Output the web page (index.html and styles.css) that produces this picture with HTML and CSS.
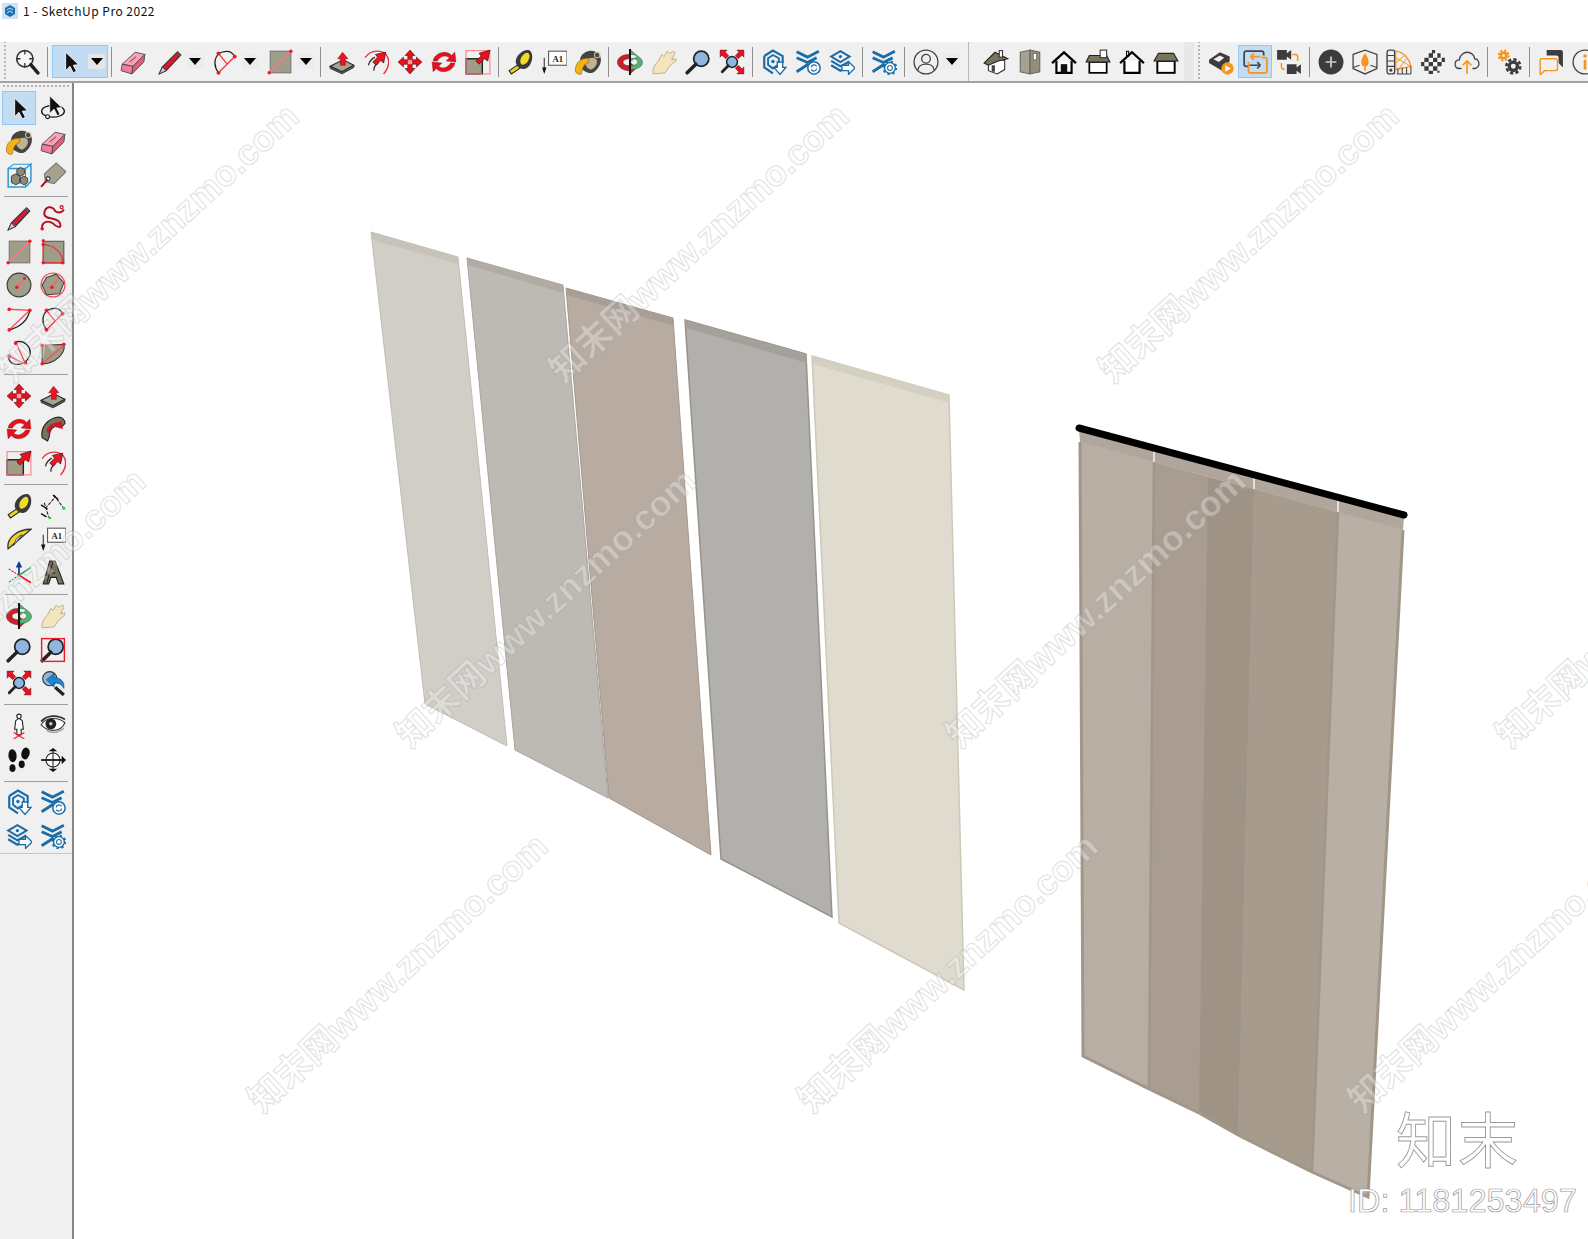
FILE: index.html
```html
<!DOCTYPE html>
<html lang="zh">
<head>
<meta charset="utf-8">
<title>1 - SketchUp Pro 2022</title>
<link rel="stylesheet" href="styles.css">
</head>
<body>
<svg class="defs" aria-hidden="true">
<defs>
<symbol id="mag" viewBox="0 0 24 24"><circle cx="10" cy="9" r="7.5" fill="#f6f6f6" stroke="#333" stroke-width="1.5"/><path d="M10 1v4M10 13v4M2 9h4M14 9h4" stroke="#333" stroke-width="1.2"/><path d="M15.5 14.5L22 22" stroke="#222" stroke-width="3.2" stroke-linecap="round"/></symbol>
<symbol id="sel" viewBox="0 0 24 24"><path d="M8 3V20L12 16L15 22L18 20.5L15 15L20 14.5Z" fill="#111" stroke="#fff" stroke-width=".8"/></symbol>
<symbol id="eraser" viewBox="0 0 24 24"><path d="M2 14L14 3L23 5L12 16Z" fill="#f7a3b8" stroke="#444" stroke-width=".8"/><path d="M2 14L12 16L11 23L1 20Z" fill="#f07c9b" stroke="#444" stroke-width=".8"/><path d="M23 5L22 12L11 23L12 16Z" fill="#d9607f" stroke="#444" stroke-width=".8"/><path d="M9 12l6-5" stroke="#a55" stroke-width="1"/></symbol>
<symbol id="pencil" viewBox="0 0 24 24"><path d="M2 23L5 16.5L19 2.5L22 5.5L8.500 20Z" fill="#d9192e" stroke="#333" stroke-width="1"/><path d="M2 23L5 16.500L8.500 20Z" fill="#ccc" stroke="#333" stroke-width=".8"/><path d="M19 2.500L22 5.500L20.500 7L17.500 4Z" fill="#555"/></symbol>
<symbol id="arc3" viewBox="0 0 24 24"><path d="M6 22C0 14 3 5 9 3C15 1 19 3 21 7" fill="none" stroke="#222" stroke-width="1.2"/><path d="M6 4L14 14M21 7L6 22" stroke="#f6333f" stroke-width="1.2"/><g fill="#f01828"><circle cx="6" cy="4" r="1.8"/><circle cx="21" cy="7" r="1.8"/><circle cx="6" cy="22" r="1.8"/></g></symbol>
<symbol id="rect" viewBox="0 0 24 24"><rect x="3" y="2" width="19" height="20" fill="#9f9c87" stroke="#777"/><path d="M2 22L22 2" stroke="#fa7a82" stroke-width="1.4"/><circle cx="2" cy="22" r="1.6" fill="#f01828"/><circle cx="22" cy="2" r="1.6" fill="#f01828"/></symbol>
<symbol id="push" viewBox="0 0 24 24"><path d="M1 16L13 10L23 15L12 21Z" fill="#a5a28d" stroke="#222" stroke-width="1"/><path d="M1 16V18L12 23L23 17V15L12 21Z" fill="#555" stroke="#222" stroke-width=".6"/><path d="M12.500 3L17.500 9H15V15H10.500V9H8Z" fill="#ec1325" stroke="#811" stroke-width=".5"/></symbol>
<symbol id="follow" viewBox="0 0 24 24"><path d="M2 8C7 0 20 0 23 8C25 14 22 20 19 23" fill="none" stroke="#f02c3a" stroke-width="1.3"/><path d="M5 15C6 11 8 9 11 7.500M10 20C10 16 12 14 14 13" fill="none" stroke="#333" stroke-width="1.2"/><path d="M21 3L19 13L16.500 10.500L12 15L9 12L13.500 7.500L11.500 5Z" fill="#ec1325" stroke="#411" stroke-width=".7"/></symbol>
<symbol id="move" viewBox="0 0 24 24"><path d="M12 1L16.500 6H14V10H18V7.500L23 12L18 16.500V14H14V18H16.500L12 23L7.500 18H10V14H6V16.500L1 12L6 7.500V10H10V6H7.500Z" fill="#e8101f" stroke="#511" stroke-width=".6"/><path d="M10 10h4v4h-4z" fill="#f1a0a0"/></symbol>
<symbol id="rotate" viewBox="0 0 24 24"><path d="M2 11C3 4 14 0 19 6L22 3L23 12L14 11L17 8C13 5 8 7 6 11Z" fill="#e8101f" stroke="#711" stroke-width=".4"/><path d="M22 13C21 20 10 24 5 18L2 21L1 12L10 13L7 16C11 19 16 17 18 13Z" fill="#e8101f" stroke="#711" stroke-width=".4"/></symbol>
<symbol id="scale" viewBox="0 0 24 24"><rect x="1" y="9" width="15" height="14" fill="#9f9c87" stroke="#222" stroke-width="1.3"/><rect x="1" y="1.500" width="22" height="21.500" fill="none" stroke="#f98088"/><path d="M23 1L21 11L18 9L13 14L10 11L15 6.500L13 4Z" fill="#e8101f" stroke="#511" stroke-width=".7"/></symbol>
<symbol id="tape" viewBox="0 0 24 24"><path d="M11 14L2 20L4 23L13 17Z" fill="#eed31d" stroke="#222" stroke-width="1"/><path d="M8 12C8 6 15 0 20 1C25 3 24 13 19 17C15 20 9 18 8 12Z" fill="#3a3a3a"/><ellipse cx="16.500" cy="9" rx="3.500" ry="6" transform="rotate(30 16.500 9)" fill="#f2dc2a"/></symbol>
<symbol id="text" viewBox="0 0 24 24"><rect x="7" y="2" width="17" height="13" fill="#fff" stroke="#555"/><text x="15.500" y="12" text-anchor="middle" class="a1">A1</text><path d="M3 8V21" stroke="#333"/><path d="M1 17h4l-2 6z" fill="#111"/></symbol>
<symbol id="paint" viewBox="0 0 24 24"><path d="M5 8C8 1 17 0 21.500 4C26 9 24 16 18 21C14 24 7 21 4 15Z" fill="#444"/><path d="M9 12C11 8 17 7 19.500 9.500C22 13 18 18 15 19C12 19 9 15 9 12Z" fill="#c1b291"/><circle cx="20.500" cy="5.500" r="2.500" fill="none" stroke="#c9bc9a"/><path d="M0.500 21C-0.500 13 5 8 13 8.500L12 13C9 13.500 7 16 6 23C4 24 1.500 23 0.500 21Z" fill="#f5b116" stroke="#7b5a0a" stroke-width=".5"/></symbol>
<symbol id="orbit" viewBox="0 0 24 24"><path d="M11.500 5C5 5 0 8 0.500 13C1 17 6 20 11.500 20V23.500L18 17.500L11.500 12V15.500C8 15.500 5.500 14 5.500 12C5.500 10.500 8 9 11.500 9Z" fill="#c8202e" stroke="#611" stroke-width=".5"/><path d="M12.500 5V1L19 6.500L12.500 11.500V8.500C16 8.500 19 9.500 19 12C19 14 16.500 15 12.500 15.500V19C19 19 24 16 23.500 12C23 8 18 5 12.500 5Z" fill="#58b26f" stroke="#265" stroke-width=".5"/><path d="M12 0V24" stroke="#111" stroke-width="1.8"/></symbol>
<symbol id="pan" viewBox="0 0 24 24"><path d="M2 23C1 18 4 14 7 11L10 5L12 7L15 2L17 4L21 2L22 4L19 10L23 9L23 11L17 16L13 22Z" fill="#f3e6bf" stroke="#b8a67e" stroke-width=".8"/></symbol>
<symbol id="zoom" viewBox="0 0 24 24"><circle cx="15" cy="9" r="7" fill="#8fb6e0" stroke="#222" stroke-width="1.6"/><path d="M10 14L2 22" stroke="#222" stroke-width="3.2" stroke-linecap="round"/></symbol>
<symbol id="zoomw" viewBox="0 0 24 24"><circle cx="14.500" cy="9" r="7" fill="#8fb6e0" stroke="#222" stroke-width="1.6"/><path d="M10 14L2 22" stroke="#222" stroke-width="3.2" stroke-linecap="round"/><rect x="1.500" y="1.500" width="21" height="21" fill="none" stroke="#ee1a2b" stroke-width="1.3"/></symbol>
<symbol id="zext" viewBox="0 0 24 24"><circle cx="12" cy="12" r="5" fill="#8fb6e0" stroke="#222" stroke-width="1.4"/><path d="M8.500 15.500L3 21" stroke="#222" stroke-width="2.6" stroke-linecap="round"/><path d="M1 1H7.500L5.700 2.800L9 6.200L6.200 9L2.800 5.700L1 7.500ZM23 1V7.500L21.200 5.700L17.800 9L15 6.200L18.300 2.800L16.500 1ZM23 23H16.500L18.300 21.200L15 17.800L17.800 15L21.200 18.300L23 16.500Z" fill="#e8101f" stroke="#411" stroke-width=".4"/></symbol>
<symbol id="prev" viewBox="0 0 24 24"><circle cx="9" cy="8" r="6.500" fill="#8fb6e0" stroke="#333"/><path d="M6 9L13 3V7C19 7 23 11 22 17C20 13 17 12 13 12V16Z" fill="#1e86d8" stroke="#135" stroke-width=".5"/><path d="M14 16L22 23" stroke="#222" stroke-width="3"/></symbol>
<symbol id="ext1" viewBox="0 0 24 24"><path d="M3 6.500L11 1.500L20 6.500V13M3 6.500V17L11 22.500" fill="none" stroke="#1a6ca8" stroke-width="2"/><path d="M11 5.500L16.500 8.500V14L11 18L6.500 14.500V8.500Z" fill="none" stroke="#1a6ca8" stroke-width="1.700"/><circle cx="11" cy="11.500" r="1.600" fill="#1a6ca8"/><path d="M15 12h5v5h3l-5.500 6.500L12 17h3z" fill="#fff" stroke="#1a6ca8" stroke-width="1.200"/></symbol>
<symbol id="ext2" viewBox="0 0 24 24"><path d="M1.500 2.500L11.500 7.500L22 2M1.500 8L11.500 12.500L20 8M1.500 21L11.500 14.500L14 16" fill="none" stroke="#1a6ca8" stroke-width="2.600"/><circle cx="17.500" cy="17.500" r="5.700" fill="#fff" stroke="#1a6ca8" stroke-width="1.400"/><path d="M15 17a2.700 2.700 0 0 1 5 -1M20 18a2.700 2.700 0 0 1 -5 1" fill="none" stroke="#1a6ca8" stroke-width="1.100"/></symbol>
<symbol id="ext3" viewBox="0 0 24 24"><path d="M10.500 2L19 7L10.500 12L2 7Z" fill="none" stroke="#1a6ca8" stroke-width="1.800"/><circle cx="10.500" cy="7" r="1.500" fill="#1a6ca8"/><path d="M2 11L10.500 16L18 12M2 15L10.500 20L14 18" fill="none" stroke="#1a6ca8" stroke-width="2"/><path d="M12 15h6v-3.500l6 6l-6 6V20h-6z" fill="#fff" stroke="#1a6ca8" stroke-width="1.200"/></symbol>
<symbol id="ext4" viewBox="0 0 24 24"><path d="M1.500 2.500L11.500 7.500L22 2M1.500 8L11.500 12.500L20 8M1.500 21L11.500 14.500L14 16" fill="none" stroke="#1a6ca8" stroke-width="2.600"/><circle cx="17.500" cy="17.500" r="5" fill="#fff" stroke="#1a6ca8" stroke-width="1.300"/><circle cx="17.500" cy="17.500" r="6" fill="none" stroke="#1a6ca8" stroke-width="1.800" stroke-dasharray="2 2.700"/><circle cx="17.500" cy="17.500" r="2.200" fill="none" stroke="#1a6ca8"/></symbol>
<symbol id="user" viewBox="0 0 24 24"><circle cx="12" cy="12" r="11" fill="none" stroke="#444" stroke-width="1.200"/><circle cx="12" cy="9" r="4" fill="none" stroke="#444" stroke-width="1.200"/><path d="M4.500 19.500C5 15 9 14 12 14C15 14 19 15 19.500 19.500" fill="none" stroke="#444" stroke-width="1.200"/></symbol>
<symbol id="h1" viewBox="0 0 24 24"><path d="M5 12V20L13 23L20 19V11L13 7Z" fill="#fff" stroke="#333"/><path d="M1 13L11 3L23 9L14 11L5 15Z" fill="#77735f" stroke="#222"/><rect x="15" y="1.500" width="3" height="6" fill="#fff" stroke="#333"/><path d="M8 15h3v6h-3z" fill="#444"/></symbol>
<symbol id="h2" viewBox="0 0 24 24"><path d="M3 3L12 1V23L3 21Z" fill="#a5a28d" stroke="#666"/><path d="M12 1L21 3V21L12 23Z" fill="#928e79" stroke="#666"/><rect x="15" y="4" width="3" height="6" fill="#fff" stroke="#555" stroke-width=".6"/></symbol>
<symbol id="h3" viewBox="0 0 24 24"><path d="M1 13L12 3L23 13" fill="none" stroke="#000" stroke-width="2.200"/><path d="M5 11V22H19V11" fill="#fff" stroke="#000" stroke-width="2"/><rect x="9" y="14" width="6" height="8" fill="#111"/></symbol>
<symbol id="h4" viewBox="0 0 24 24"><rect x="4" y="12" width="16" height="10" fill="#fff" stroke="#000" stroke-width="1.600"/><path d="M4 6H20L23 12H1Z" fill="#77735f" stroke="#222"/><rect x="14" y="1" width="6" height="7" fill="#fff" stroke="#333"/></symbol>
<symbol id="h5" viewBox="0 0 24 24"><path d="M5 11V22H19V11" fill="#fff" stroke="#000" stroke-width="2"/><path d="M7 8V2h2v5" fill="#fff" stroke="#000"/><path d="M1 13L12 3L23 13" fill="none" stroke="#000" stroke-width="2"/></symbol>
<symbol id="h6" viewBox="0 0 24 24"><rect x="4" y="11" width="16" height="11" fill="#fff" stroke="#000" stroke-width="1.800"/><path d="M5 4H19L23 11H1Z" fill="#77735f" stroke="#222"/></symbol>
<symbol id="ssplay" viewBox="0 0 24 24"><path d="M1 10L11 3L20 7V11L13 20L1 13Z" fill="#3c3c3c"/><path d="M5 9.500L11 6L15 8L10 12Z" fill="#f0f0f0"/><circle cx="18" cy="18" r="5.700" fill="#f7931e"/><path d="M16 15l5 3-5 3z" fill="#fff"/></symbol>
<symbol id="swap" viewBox="0 0 24 24"><path d="M20 6V4C20 2.500 19 2 18 2H4C3 2 2 3 2 4V14C2 15 3 16 4 16H6" fill="none" stroke="#444" stroke-width="1.600"/><path d="M6 12V20C6 21 7 22 8 22H21C22 22 23 21 23 20V10C23 9 22 8 21 8H18" fill="none" stroke="#f7931e" stroke-width="1.600"/><path d="M17 7H8M8 7l3-3M8 7l3 3" fill="none" stroke="#f7931e" stroke-width="1.500"/><path d="M7 15H17M17 15l-3-3M17 15l-3 3" fill="none" stroke="#444" stroke-width="1.500"/></symbol>
<symbol id="cam" viewBox="0 0 24 24"><path d="M1 1H10V10H1ZM10 4L14 1V10L10 7Z" fill="#3c3c3c"/><path d="M10 14H19V23H10ZM19 17L23 14V23L19 20Z" fill="#3c3c3c"/><path d="M15 5H18Q20 5 20 7V11M5 13V16Q5 19 8 19" fill="none" stroke="#f7931e" stroke-width="1.400"/></symbol>
<symbol id="plus" viewBox="0 0 24 24"><circle cx="12" cy="12" r="11.500" fill="#3c3c3c"/><path d="M12 7V17M7 12H17" stroke="#ccc" stroke-width="1.600"/></symbol>
<symbol id="tree" viewBox="0 0 24 24"><path d="M1 5L12 1L23 5V18L12 23L1 18Z" fill="none" stroke="#444" stroke-width="1.200"/><path d="M1 17L7 15M23 17L17 15" stroke="#444"/><path d="M12 4C15 8 16 12 15 14C14 17 10 17 9 14C8 12 9 8 12 4Z" fill="#f7931e"/><path d="M12 16V20" stroke="#f7931e" stroke-width="1.500"/></symbol>
<symbol id="swatch" viewBox="0 0 24 24"><rect x="1" y="1" width="7" height="22" rx="2" fill="none" stroke="#444" stroke-width="1.300"/><path d="M1 6H8M1 11H8M1 16H8" stroke="#444"/><circle cx="4.500" cy="19.500" r="1.400" fill="#444"/><path d="M9 2C17 3 22 10 23 16L9 19Z" fill="none" stroke="#f7931e" stroke-width="1.200"/><path d="M9 8L23 16M9 13L17 6M12 18L19 9" stroke="#f7931e" stroke-width=".9"/><path d="M11 23V18M15 23V17M19 23V17M23 23V16M10 23H23" stroke="#444"/></symbol>
<symbol id="check" viewBox="0 0 24 24"><circle cx="12" cy="12" r="11" fill="#f4f4f4"/><path d="M8 4h4v4H8zM16 4h3v4h-3zM4 8h4v4H4zM12 8h4v4h-4zM20 8h3v4h-3zM8 12h4v4H8zM16 12h4v4h-4zM1 12h3v4H1zM4 16h4v4H4zM12 16h4v4h-4zM8 20h4v3H8zM16 20h2v2h-2zM11 1h3v3h-3z" fill="#3c3c3c"/></symbol>
<symbol id="cloud" viewBox="0 0 24 24"><path d="M7 18H5C2 18 1 16 1 14C1 11 3 10 5 10C5 6 9 3 12 3C16 3 19 6 19 9C22 9 23 12 23 14C23 16 21 18 19 18H17" fill="none" stroke="#444" stroke-width="1.200"/><path d="M12 23V12M8 15l4-4 4 4" fill="none" stroke="#f7931e" stroke-width="1.500"/></symbol>
<symbol id="gears" viewBox="0 0 24 24"><circle cx="7" cy="6" r="2.600" fill="none" stroke="#f7931e" stroke-width="2.400"/><circle cx="7" cy="6" r="4.600" fill="none" stroke="#f7931e" stroke-width="1.800" stroke-dasharray="2 1.600"/><circle cx="16" cy="16" r="3.800" fill="none" stroke="#3c3c3c" stroke-width="3"/><circle cx="16" cy="16" r="6.400" fill="none" stroke="#3c3c3c" stroke-width="2.400" stroke-dasharray="3 2"/></symbol>
<symbol id="chat" viewBox="0 0 24 24"><path d="M8 1H21Q23 1 23 3V17L19 13V8Q19 6 17 6H8Z" fill="#3c3c3c"/><path d="M3 9H16Q18 9 18 11V18Q18 20 16 20H6L2 24V11Q2 9 3 9Z" fill="#f0f0f0" stroke="#f7931e" stroke-width="1.300"/></symbol>
<symbol id="info" viewBox="0 0 24 24"><circle cx="12" cy="12" r="11" fill="none" stroke="#444" stroke-width="1.200"/><path d="M12 10V19" stroke="#f7931e" stroke-width="2.400"/><circle cx="12" cy="6.500" r="1.600" fill="#f7931e"/></symbol>
<symbol id="osel" viewBox="0 0 24 24"><ellipse cx="12" cy="15" rx="10.500" ry="5.500" fill="none" stroke="#111" stroke-width="1.200"/><path d="M9 1V17L13 13L16 19L18.500 18L15.500 12L20 11.500Z" fill="#111" stroke="#fff" stroke-width=".6"/><circle cx="7" cy="20" r="1.800" fill="#f0f0f0" stroke="#111"/></symbol>
<symbol id="comp" viewBox="0 0 24 24"><path d="M2 6H18L23 2V18L18 23H2Z" fill="none" stroke="#2b9ad6" stroke-width="1.400"/><path d="M2 6L7 2H23M18 6V23" stroke="#2b9ad6" stroke-width="1" fill="none"/><path d="M5 13L9 11L13 13V19L9 21L5 19ZM10 7L13.500 5L17 7V11L13.500 13L10 11ZM13 15L16.500 13L20 15V19L16.500 21L13 19Z" fill="#8d8a78" stroke="#333" stroke-width=".8"/></symbol>
<symbol id="tag" viewBox="0 0 24 24"><path d="M15 1L24 9L13 20L5 18L4 11Z" fill="#a5a28d" stroke="#777"/><circle cx="7.500" cy="15.500" r="1.800" fill="#fff" stroke="#333"/><path d="M7 16L1 23" stroke="#a01020" stroke-width="1.800"/></symbol>
<symbol id="free" viewBox="0 0 24 24"><path d="M2 22C1 15 8 14 12 17C16 21 21 22 18 16C15 11 3 14 4 7C5 1 11 1 13 4C15 8 20 8 22 4" fill="none" stroke="#b01020" stroke-width="1.800"/><circle cx="2" cy="22" r="1.600" fill="#e8101f"/><circle cx="20" cy="2" r="1.400" fill="none" stroke="#b01020"/></symbol>
<symbol id="rrect" viewBox="0 0 24 24"><path d="M3 2H22V22H3Z" fill="#9f9c87" stroke="#555"/><path d="M3 5C14 6 21 13 21 22H3ZM3 5V2" fill="none" stroke="#f0333f" stroke-width="1.200"/><g fill="#f01828"><circle cx="3" cy="5" r="1.600"/><circle cx="21" cy="22" r="1.600"/><circle cx="3" cy="22" r="1.600"/><circle cx="3" cy="1.500" r="1.400"/></g></symbol>
<symbol id="circ" viewBox="0 0 24 24"><circle cx="12" cy="12" r="11" fill="#a09d88" stroke="#333"/><path d="M10 14L17 6" stroke="#f4666f" stroke-width="1.300"/><circle cx="10" cy="14" r="1.600" fill="#f01828"/><circle cx="17" cy="6" r="1.300" fill="#f01828"/></symbol>
<symbol id="poly" viewBox="0 0 24 24"><circle cx="12" cy="12" r="11" fill="none" stroke="#f4505c" stroke-width="1.200"/><path d="M6 5L15 2L22 10L18 20L6 21L2 12Z" fill="#a09d88" stroke="#444"/><path d="M11 14L17 6" stroke="#f4666f" stroke-width="1.300"/><circle cx="11" cy="14" r="1.600" fill="#f01828"/></symbol>
<symbol id="arc2" viewBox="0 0 24 24"><path d="M3 22C12 20 20 14 22 4" fill="none" stroke="#222" stroke-width="1.200"/><path d="M3 3L22 4L3 22" fill="none" stroke="#f6505a" stroke-width="1.200"/><g fill="#f01828"><circle cx="3" cy="3" r="1.700"/><circle cx="22" cy="4" r="1.700"/><circle cx="3" cy="22" r="1.700"/></g></symbol>
<symbol id="arc4" viewBox="0 0 24 24"><path d="M8 2C17 -1 24 7 22 14C20 20 14 24 7 22C4 21 3 19 2 16" fill="none" stroke="#222" stroke-width="1.200"/><path d="M9 2L18 22M3 15L18 22" fill="none" stroke="#f6505a" stroke-width="1.200"/><circle cx="9" cy="3" r="1.700" fill="#f01828"/><circle cx="3" cy="15" r="1.700" fill="#f01828"/><circle cx="18" cy="21" r="1.700" fill="#f01828"/></symbol>
<symbol id="pie" viewBox="0 0 24 24"><path d="M2 5L22 4C24 12 14 22 2 22Z" fill="#9f9c87" stroke="#333"/><path d="M2 5H22L2 22" fill="none" stroke="#f6505a" stroke-width="1.300"/><g fill="#f01828"><circle cx="2" cy="5" r="1.600"/><circle cx="22" cy="4" r="1.600"/><circle cx="2" cy="22" r="1.600"/></g></symbol>
<symbol id="bend" viewBox="0 0 24 24"><path d="M2 20C0 10 8 2 17 1C20 1 23 3 23 7L20 10C16 7 10 10 9 16C9 19 8 21 7 23Z" fill="#77735f" stroke="#222"/><path d="M6 14C7 9 13 5 18 6L20 4L21 12L13 10L16 8C12 8 9 11 9 17Z" fill="#d91225"/></symbol>
<symbol id="dim" viewBox="0 0 24 24"><path d="M5 14L14 4M4 9L8 22M13 2L21 13" stroke="#222" stroke-width="1" stroke-dasharray="3 1.200"/><path d="M12 2L17 6M1 11L7 15M1 19L6 22" stroke="#111" stroke-width="1.300"/><circle cx="22" cy="14" r="1.400" fill="#2c3"/><circle cx="9" cy="23" r="1.400" fill="#2c3"/></symbol>
<symbol id="prot" viewBox="0 0 24 24"><path d="M2 21C0 11 11 3 23 3Z" fill="#f0d625" stroke="#333" stroke-width="1.200"/><path d="M8 15C9 12 12 9 15 8L7 18Z" fill="#f0f0f0" stroke="#333" stroke-width=".8"/></symbol>
<symbol id="axes" viewBox="0 0 24 24"><path d="M12 14V3" stroke="#0a3a9a" stroke-width="1.600"/><path d="M12 1l3 6H9z" fill="#0a3a9a"/><path d="M12 14L23 7" stroke="#18a83c" stroke-width="1.400"/><path d="M12 14L23 21" stroke="#e8101f" stroke-width="1.400"/><path d="M12 14L2 8" stroke="#e8101f" stroke-width="1" stroke-dasharray="2 1"/><path d="M12 14L2 21" stroke="#18a83c" stroke-width="1" stroke-dasharray="2 1"/><path d="M12 14V23" stroke="#9cb" stroke-width="1.400" stroke-dasharray="2 1"/></symbol>
<symbol id="text3d" viewBox="0 0 24 24"><path d="M3 22L9 1H14L22 22H17L15 16H10L8 22Z" fill="#77735f" stroke="#222"/><path d="M6 22L11 5L12 1M10 12H14" fill="none" stroke="#222"/></symbol>
<symbol id="person" viewBox="0 0 24 24"><circle cx="12" cy="3" r="2" fill="#fff" stroke="#222"/><path d="M9 7L12 5L15 7L16 15L14 15L14 20H10L10 15L8 15Z" fill="#fff" stroke="#222"/><path d="M7 18L17 24M17 18L7 24" stroke="#ee1a2b"/></symbol>
<symbol id="eye" viewBox="0 0 24 24"><path d="M1 11C5 4 16 3 23 9C19 18 8 18 1 11Z" fill="#fff" stroke="#333"/><circle cx="10" cy="10" r="5" fill="#222"/><circle cx="10" cy="10" r="1.600" fill="#ccc"/><path d="M1 8C6 2 16 1 23 6" fill="none" stroke="#333" stroke-width="1.600"/><path d="M6 16C11 19 17 18 22 14" fill="none" stroke="#aaa" stroke-width="1.600"/></symbol>
<symbol id="foot" viewBox="0 0 24 24"><ellipse cx="6" cy="8" rx="3.800" ry="6" fill="#111" transform="rotate(-5 6 8)"/><ellipse cx="6" cy="19.500" rx="2.800" ry="3.500" fill="#111"/><ellipse cx="18" cy="6" rx="3.800" ry="5.500" fill="#111" transform="rotate(12 18 6)"/><ellipse cx="14.500" cy="16" rx="2.800" ry="3.500" fill="#111"/></symbol>
<symbol id="section" viewBox="0 0 24 24"><circle cx="12" cy="12" r="6.500" fill="#fff" stroke="#222"/><path d="M1 12H23" stroke="#111" stroke-width="1.600"/><path d="M12 2V22" stroke="#222"/><path d="M8 4L12 1L16 4M8 20L12 23L16 20" fill="#111"/><path d="M20 8l4 4-4 4z" fill="#111"/></symbol>
</defs>
</svg>

<div class="page">
  <header class="titlebar">
    <svg class="appicon" viewBox="0 0 16 16"><rect width="16" height="16" fill="#cfe1f2"/><path d="M3 5L8 2L13 5V11L8 14L3 11Z" fill="#1d6fb4"/><path d="M5 7L8 5L11 7M5 10L8 8L11 10" stroke="#cfe1f2" fill="none"/></svg>
    <span class="apptitle">1 - SketchUp Pro 2022</span>
  </header>

  <nav class="toolbar">
    <div class="seg seg-first">
      <button class="b"><svg class="i"><use href="#mag"/></svg></button>
      <span class="sep"></span>
      <div class="active split"><svg class="i"><use href="#sel"/></svg><span class="drop drop-on"></span></div>
      <span class="sep"></span>
      <button class="b"><svg class="i"><use href="#eraser"/></svg></button>
      <button class="b gap-s"><svg class="i"><use href="#pencil"/></svg></button><span class="drop"></span>
      <button class="b gap-m"><svg class="i"><use href="#arc3"/></svg></button><span class="drop"></span>
      <button class="b gap-l"><svg class="i"><use href="#rect"/></svg></button><span class="drop"></span>
      <span class="sep gap-sep"></span>
      <button class="b"><svg class="i"><use href="#push"/></svg></button>
      <button class="b"><svg class="i"><use href="#follow"/></svg></button>
      <button class="b"><svg class="i"><use href="#move"/></svg></button>
      <button class="b"><svg class="i"><use href="#rotate"/></svg></button>
      <button class="b"><svg class="i"><use href="#scale"/></svg></button>
      <span class="sep"></span>
      <button class="b"><svg class="i"><use href="#tape"/></svg></button>
      <button class="b"><svg class="i"><use href="#text"/></svg></button>
      <button class="b"><svg class="i"><use href="#paint"/></svg></button>
      <span class="sep"></span>
      <button class="b"><svg class="i"><use href="#orbit"/></svg></button>
      <button class="b"><svg class="i"><use href="#pan"/></svg></button>
      <button class="b"><svg class="i"><use href="#zoom"/></svg></button>
      <button class="b"><svg class="i"><use href="#zext"/></svg></button>
      <span class="sep"></span>
      <button class="b"><svg class="i"><use href="#ext1"/></svg></button>
      <button class="b"><svg class="i"><use href="#ext2"/></svg></button>
      <button class="b"><svg class="i"><use href="#ext3"/></svg></button>
      <span class="sep"></span>
      <button class="b"><svg class="i"><use href="#ext4"/></svg></button>
      <span class="sep"></span>
      <button class="b"><svg class="i"><use href="#user"/></svg></button><span class="drop"></span>
    </div>
    <div class="seg seg-mid">
      <button class="b"><svg class="i"><use href="#h1"/></svg></button>
      <button class="b"><svg class="i"><use href="#h2"/></svg></button>
      <button class="b"><svg class="i"><use href="#h3"/></svg></button>
      <button class="b"><svg class="i"><use href="#h4"/></svg></button>
      <button class="b"><svg class="i"><use href="#h5"/></svg></button>
      <button class="b"><svg class="i"><use href="#h6"/></svg></button>
    </div>
    <div class="seg seg-last">
      <button class="b"><svg class="i"><use href="#ssplay"/></svg></button>
      <button class="b on"><svg class="i"><use href="#swap"/></svg></button>
      <button class="b"><svg class="i"><use href="#cam"/></svg></button>
      <span class="sep"></span>
      <button class="b"><svg class="i"><use href="#plus"/></svg></button>
      <button class="b"><svg class="i"><use href="#tree"/></svg></button>
      <button class="b"><svg class="i"><use href="#swatch"/></svg></button>
      <button class="b"><svg class="i"><use href="#check"/></svg></button>
      <button class="b"><svg class="i"><use href="#cloud"/></svg></button>
      <span class="sep"></span>
      <button class="b"><svg class="i"><use href="#gears"/></svg></button>
      <span class="sep"></span>
      <button class="b"><svg class="i"><use href="#chat"/></svg></button>
      <button class="b"><svg class="i"><use href="#info"/></svg></button>
    </div>
  </nav>

  <main class="work">
    <aside class="side">
      <div class="side-inner">
        <div class="grip-h"></div>
        <div class="tools">
          <button class="b on"><svg class="i"><use href="#sel"/></svg></button><button class="b"><svg class="i"><use href="#osel"/></svg></button>
          <button class="b"><svg class="i"><use href="#paint"/></svg></button><button class="b"><svg class="i"><use href="#eraser"/></svg></button>
          <button class="b"><svg class="i"><use href="#comp"/></svg></button><button class="b"><svg class="i"><use href="#tag"/></svg></button>
        </div>
        <hr class="rule">
        <div class="tools">
          <button class="b"><svg class="i"><use href="#pencil"/></svg></button><button class="b"><svg class="i"><use href="#free"/></svg></button>
          <button class="b"><svg class="i"><use href="#rect"/></svg></button><button class="b"><svg class="i"><use href="#rrect"/></svg></button>
          <button class="b"><svg class="i"><use href="#circ"/></svg></button><button class="b"><svg class="i"><use href="#poly"/></svg></button>
          <button class="b"><svg class="i"><use href="#arc2"/></svg></button><button class="b"><svg class="i"><use href="#arc3"/></svg></button>
          <button class="b"><svg class="i"><use href="#arc4"/></svg></button><button class="b"><svg class="i"><use href="#pie"/></svg></button>
        </div>
        <hr class="rule">
        <div class="tools">
          <button class="b"><svg class="i"><use href="#move"/></svg></button><button class="b"><svg class="i"><use href="#push"/></svg></button>
          <button class="b"><svg class="i"><use href="#rotate"/></svg></button><button class="b"><svg class="i"><use href="#bend"/></svg></button>
          <button class="b"><svg class="i"><use href="#scale"/></svg></button><button class="b"><svg class="i"><use href="#follow"/></svg></button>
        </div>
        <hr class="rule">
        <div class="tools">
          <button class="b"><svg class="i"><use href="#tape"/></svg></button><button class="b"><svg class="i"><use href="#dim"/></svg></button>
          <button class="b"><svg class="i"><use href="#prot"/></svg></button><button class="b"><svg class="i"><use href="#text"/></svg></button>
          <button class="b"><svg class="i"><use href="#axes"/></svg></button><button class="b"><svg class="i"><use href="#text3d"/></svg></button>
        </div>
        <hr class="rule">
        <div class="tools">
          <button class="b"><svg class="i"><use href="#orbit"/></svg></button><button class="b"><svg class="i"><use href="#pan"/></svg></button>
          <button class="b"><svg class="i"><use href="#zoom"/></svg></button><button class="b"><svg class="i"><use href="#zoomw"/></svg></button>
          <button class="b"><svg class="i"><use href="#zext"/></svg></button><button class="b"><svg class="i"><use href="#prev"/></svg></button>
        </div>
        <hr class="rule">
        <div class="tools">
          <button class="b"><svg class="i"><use href="#person"/></svg></button><button class="b"><svg class="i"><use href="#eye"/></svg></button>
          <button class="b"><svg class="i"><use href="#foot"/></svg></button><button class="b"><svg class="i"><use href="#section"/></svg></button>
        </div>
        <hr class="rule">
        <div class="tools">
          <button class="b"><svg class="i"><use href="#ext1"/></svg></button><button class="b"><svg class="i"><use href="#ext2"/></svg></button>
          <button class="b"><svg class="i"><use href="#ext3"/></svg></button><button class="b"><svg class="i"><use href="#ext4"/></svg></button>
        </div>
      </div>
    </aside>

    <section class="canvas">
      <svg class="scene" viewBox="74 83 1514 1156">
        <g>
          <polygon points="371,232 458,257 507,746 425,704" fill="#d1cdc7" stroke="#c0bcb2"/>
          <polygon points="371,232 458,257 458,264 372,240" fill="#c7c3b9"/>
        </g>
        <g>
          <polygon points="467,258 563,285 608,798 515,750" fill="#bdb9b3" stroke="#a9a59d"/>
          <polygon points="467,258 563,285 564,293 468,265" fill="#b0aca4"/>
        </g>
        <g>
          <polygon points="566,288 673,318 711,855 609,798" fill="#b8aca2" stroke="#a3978c"/>
          <polygon points="566,288 673,318 674,326 567,295" fill="#a99e94"/>
        </g>
        <g>
          <polygon points="685,320 806,354 832,917 721,859" fill="#b2b0ac" stroke="#96938c" stroke-width="1.500"/>
          <polygon points="685,320 806,354 807,363 686,328" fill="#a4a09a"/>
        </g>
        <g>
          <polygon points="812,356 949,395 964,990 839,923" fill="#dfdbcf" stroke="#cdc9b8" stroke-width="1.500"/>
          <polygon points="812,356 949,395 950,403 813,364" fill="#d4d0c1"/>
        </g>
        <g>
          <polygon points="1080,442 1403,530 1368,1197 1312,1172 1238,1135 1199,1113 1149,1089 1083,1056" fill="#a99d91"/>
          <polygon points="1080,442 1154,462 1149,1089 1083,1056" fill="#b8aea4"/>
          <polygon points="1154,462 1208,477 1199,1113 1149,1089" fill="#a99d91"/>
          <polygon points="1208,477 1254,489 1238,1135 1199,1113" fill="#9f9386"/>
          <polygon points="1254,489 1338,512 1312,1172 1238,1135" fill="#a79b8e"/>
          <polygon points="1338,512 1403,530 1368,1197 1312,1172" fill="#b8afa5"/>
          <polygon points="1079,430 1404,517 1403,530 1080,442" fill="#b0a69b"/>
          <path d="M1154 450V462M1254 477V489M1338 500V512" stroke="#e6e0d6" stroke-width="2"/>
          <path d="M1154 462L1149 1089M1338 512L1312 1172" stroke="#a29689" stroke-width="2.500"/>
          <path d="M1080 442L1083 1056L1149 1089L1199 1113L1238 1135L1312 1172L1368 1197L1403 530" fill="none" stroke="#a29689" stroke-width="3"/>
          <path d="M1079 428L1404 515" stroke="#000" stroke-width="7" stroke-linecap="round"/>
        </g>
      </svg>
    </section>
  </main>

  <svg class="overlay" viewBox="0 0 1588 1239">
    <g class="wm">
      <text transform="translate(149 243) rotate(-42.6)">知末网www.znzmo.com</text>
      <text transform="translate(699 243) rotate(-42.6)">知末网www.znzmo.com</text>
      <text transform="translate(1249 243) rotate(-42.6)">知末网www.znzmo.com</text>
      <text transform="translate(-4 608) rotate(-42.6)">知末网www.znzmo.com</text>
      <text transform="translate(546 608) rotate(-42.6)">知末网www.znzmo.com</text>
      <text transform="translate(1096 608) rotate(-42.6)">知末网www.znzmo.com</text>
      <text transform="translate(1646 608) rotate(-42.6)">知末网www.znzmo.com</text>
      <text transform="translate(398 973) rotate(-42.6)">知末网www.znzmo.com</text>
      <text transform="translate(948 973) rotate(-42.6)">知末网www.znzmo.com</text>
      <text transform="translate(1498 973) rotate(-42.6)">知末网www.znzmo.com</text>
    </g>
    <text class="logo" x="1396" y="1163">知末</text>
    <text class="logoid" x="1348" y="1212">ID: 1181253497</text>
  </svg>
</div>
</body>
</html>
```
FILE: styles.css
```css
* { box-sizing: border-box; }
html, body { margin: 0; padding: 0; background: #fff; }
.defs { position: absolute; width: 0; height: 0; }
.page {
  position: relative;
  width: 1588px;
  height: 1239px;
  overflow: hidden;
  display: flex;
  flex-direction: column;
  font-family: "Noto Sans", "Liberation Sans", sans-serif;
}
.titlebar {
  height: 42px;
  flex: none;
  display: flex;
  align-items: flex-start;
  padding: 3px 0 0 2px;
  gap: 5px;
  background: #fff;
}
.appicon { width: 16px; height: 16px; flex: none; }
.apptitle {
  font-size: 12px;
  line-height: 16px;
  letter-spacing: 0.5px;
  color: #111;
  font-family: "Noto Sans CJK SC", "Noto Sans", sans-serif;
}
.toolbar {
  height: 41px;
  flex: none;
  display: flex;
  background: #f0f0f0;
  border-bottom: 2px solid #a3a3a3;
  overflow: hidden;
}
.seg { display: flex; align-items: center; flex: none; height: 39px; }
.seg-first {
  width: 968px;
  padding-left: 10px;
  background: radial-gradient(circle, #b5b5b5 0.8px, transparent 1px) 3px 2px / 4px 4px repeat-y;
}
.seg-mid {
  width: 216px;
  padding-left: 10px;
  border-left: 1px solid #b8b8b8;
}
.seg-last {
  margin-left: 10px;
  padding-left: 10px;
  background: radial-gradient(circle, #b5b5b5 0.8px, transparent 1px) 3px 2px / 4px 4px repeat-y;
  flex: none;
  box-shadow: -10px 0 0 #e8e8e8;
}
.b {
  width: 34px;
  height: 33px;
  padding: 0;
  margin: 0;
  flex: none;
  border: 1px solid transparent;
  background: transparent;
  display: flex;
  align-items: center;
  justify-content: center;
}
.on, .active { background: #c1dcf3; border: 1px solid #90c8f6; }
.i { width: 26px; height: 26px; display: block; }
.sep {
  flex: none;
  width: 1px;
  height: 30px;
  background: #8f8f8f;
  margin: 0 4.5px 0 2.5px;
}
.gap-s { margin-left: 2.5px; }
.gap-m { margin-left: 4px; }
.gap-l { margin-left: 4.5px; }
.gap-sep { margin-left: 5.5px; }
.split {
  width: 56px;
  height: 33px;
  flex: none;
  display: flex;
  align-items: center;
  padding-left: 4px;
}
.drop {
  position: relative;
  width: 17px;
  height: 15px;
  flex: none;
  background: #ececec;
}
.drop::after {
  content: "";
  position: absolute;
  left: 2.5px;
  top: 4px;
  border-style: solid;
  border-width: 7px 6px 0;
  border-color: #000 transparent transparent;
}
.drop-on { background: #e6e6e6; margin-left: 5px; }
.work { flex: 1; display: flex; min-height: 0; }
.side {
  width: 74px;
  flex: none;
  background: #f0f0f0;
  border-right: 2px solid #868686;
}
.side-inner { border-bottom: 1px solid #c6c6c6; }
.grip-h {
  height: 8px;
  margin: 0 2px;
  background: radial-gradient(circle, #b5b5b5 0.8px, transparent 1px) 0 1px / 4px 4px repeat-x;
}
.tools {
  display: grid;
  grid-template-columns: 34px 34px;
  grid-auto-rows: 33.7px;
  padding-left: 2px;
}
.tools .b { height: 33.7px; }
.rule {
  height: 1px;
  margin: 4px 4px 4.1px;
  border: 0;
  background: #a0a0a0;
}
.canvas { flex: 1; position: relative; background: #fff; }
.scene { position: absolute; inset: 0; width: 100%; height: 100%; display: block; }
.overlay { position: absolute; inset: 0; width: 1588px; height: 1239px; pointer-events: none; }
.wm text {
  font-family: "Liberation Sans", "Noto Sans CJK SC", sans-serif;
  font-size: 35.5px;
  font-weight: 700;
  text-anchor: middle;
  dominant-baseline: central;
  fill: rgba(255, 255, 255, 0.32);
  stroke: rgba(150, 150, 150, 0.26);
  stroke-width: 1.3px;
}
.logo {
  font-family: "Noto Sans CJK SC", sans-serif;
  font-size: 60px;
  letter-spacing: 2px;
  fill: #fff;
  stroke: #9a9a9a;
  stroke-width: 0.9px;
}
.logoid {
  font-family: "Liberation Sans", sans-serif;
  font-size: 32.5px;
  fill: #fff;
  stroke: #999;
  stroke-width: 0.7px;
}
.a1 { font-family: "Liberation Serif", serif; font-size: 8px; font-weight: 700; fill: #222; }
```
